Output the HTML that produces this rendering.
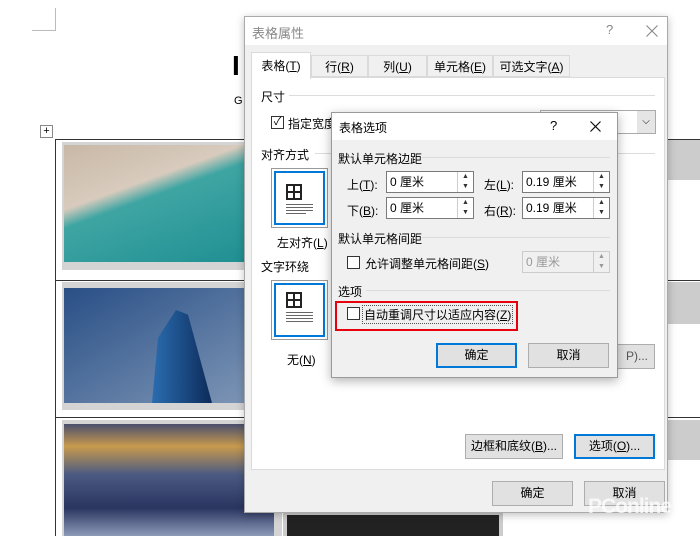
<!DOCTYPE html><html><head><meta charset="utf-8"><style>
*{margin:0;padding:0;box-sizing:border-box}
body{width:700px;height:536px;position:relative;overflow:hidden;background:#fff;font-family:"Liberation Sans","Noto Sans CJK SC",sans-serif;font-size:12px;color:#000}
.a{position:absolute}
.btn{position:absolute;background:#e1e1e1;border:1px solid #adadad;text-align:center;line-height:23px;font-size:12px}
.btn.f{border:2px solid #0078d7;line-height:21px}
.inp{position:absolute;background:#fff;border:1px solid #7a7a7a;height:22px;line-height:20px;padding-left:3px}
.spin{position:absolute;right:0;top:0;width:16px;height:20px;border-left:1px solid #ccc;font-size:7px;line-height:10px;text-align:center;color:#333}
.cb{position:absolute;width:13px;height:13px;border:1px solid #333;background:#fff}
.hl{position:absolute;height:1px;background:#dcdcdc}
.grid{position:absolute;width:16px;height:16px;border:2px solid #222;background:linear-gradient(#222,#222) center/2px 100% no-repeat,linear-gradient(#222,#222) center/100% 2px no-repeat}
u{text-decoration:underline}
</style></head><body>
<div class="a" style="left:32px;top:30px;width:24px;height:1px;background:#bbb"></div>
<div class="a" style="left:55px;top:8px;width:1px;height:23px;background:#bbb"></div>
<div class="a" style="left:232px;top:50px;font-size:28px;font-weight:bold">I</div>
<div class="a" style="left:234px;top:95px;font-size:11px">G</div>
<div class="a" style="left:40px;top:125px;width:13px;height:13px;border:1px solid #888;font-size:11px;line-height:10px;text-align:center">+</div>
<div class="a" style="left:55px;top:139px;width:645px;height:1px;background:#333"></div>
<div class="a" style="left:55px;top:280px;width:645px;height:1px;background:#333"></div>
<div class="a" style="left:55px;top:417px;width:645px;height:1px;background:#333"></div>
<div class="a" style="left:55px;top:139px;width:1px;height:397px;background:#333"></div>
<div class="a" style="left:665px;top:140px;width:35px;height:40px;background:#ccc"></div>
<div class="a" style="left:665px;top:282px;width:35px;height:42px;background:#ccc"></div>
<div class="a" style="left:665px;top:420px;width:35px;height:40px;background:#ccc"></div>
<div class="a" style="left:62px;top:142px;width:190px;height:128px;background:#d4d4d4"></div>
<div class="a" style="left:64px;top:145px;width:188px;height:117px;background:linear-gradient(160deg,#c8b8a6 0%,#d8cbbd 35%,#3fa5a3 45%,#1f8f92 100%)"></div>
<div class="a" style="left:62px;top:282px;width:190px;height:128px;background:#d4d4d4"></div>
<div class="a" style="left:64px;top:288px;width:188px;height:115px;background:linear-gradient(150deg,#294f86,#7e96b6)"></div>
<div class="a" style="left:152px;top:310px;width:60px;height:93px;background:linear-gradient(90deg,#2a6db0,#0d2b5a);clip-path:polygon(40% 0,60% 5%,100% 100%,0 100%,10% 30%)"></div>
<div class="a" style="left:62px;top:420px;width:220px;height:116px;background:#d4d4d4"></div>
<div class="a" style="left:64px;top:424px;width:210px;height:112px;background:linear-gradient(180deg,#4a4f6e 0%,#c89a4d 20%,#4b5a82 45%,#2a3560 75%,#8d9ab8 100%)"></div>
<div class="a" style="left:283px;top:513px;width:220px;height:23px;background:#ccc"></div>
<div class="a" style="left:287px;top:515px;width:212px;height:21px;background:#222"></div>

<div class="a" style="left:244px;top:16px;width:424px;height:497px;background:#f0f0f0;border:1px solid #aaa;box-shadow:0 2px 8px rgba(0,0,0,.25)"></div>
<div class="a" style="left:245px;top:17px;width:422px;height:28px;background:#fff"></div>
<div class="a" style="left:252px;top:23px;color:#888;font-size:13px">表格属性</div>
<div class="a" style="left:606px;top:22px;color:#888;font-size:13px">?</div>
<svg class="a" style="left:646px;top:25px" width="12" height="12"><path d="M0.5 0.5L11.5 11.5M11.5 0.5L0.5 11.5" stroke="#888" stroke-width="1.1"/></svg>
<div class="a" style="left:251px;top:77px;width:414px;height:393px;background:#fff;border:1px solid #dadada"></div>
<div class="a" style="left:251px;top:52px;width:60px;height:27px;background:#fff;border:1px solid #dadada;border-bottom:none;line-height:26px;text-align:center">表格(<u>T</u>)</div>
<div class="a" style="left:311px;top:55px;width:57px;height:22px;background:#f0f0f0;border:1px solid #dadada;line-height:22px;text-align:center">行(<u>R</u>)</div>
<div class="a" style="left:368px;top:55px;width:59px;height:22px;background:#f0f0f0;border:1px solid #dadada;line-height:22px;text-align:center">列(<u>U</u>)</div>
<div class="a" style="left:427px;top:55px;width:66px;height:22px;background:#f0f0f0;border:1px solid #dadada;line-height:22px;text-align:center">单元格(<u>E</u>)</div>
<div class="a" style="left:493px;top:55px;width:77px;height:22px;background:#f0f0f0;border:1px solid #dadada;line-height:22px;text-align:center">可选文字(<u>A</u>)</div>
<div class="a" style="left:261px;top:88px">尺寸</div><div class="hl" style="left:289px;top:95px;width:366px"></div>
<div class="cb" style="left:271px;top:116px;text-align:center;line-height:10px;font-size:11px">✓</div>
<div class="a" style="left:288px;top:115px">指定宽度</div>
<div class="a" style="left:540px;top:110px;width:116px;height:24px;border:1px solid #aaa;background:#fff"></div>
<div class="a" style="left:637px;top:111px;width:18px;height:22px;background:#e5e5e5;font-size:10px;text-align:center;line-height:22px">⌵</div>
<div class="a" style="left:261px;top:146px">对齐方式</div><div class="hl" style="left:315px;top:153px;width:340px"></div>
<div class="a" style="left:271px;top:168px;width:57px;height:60px;border:1px solid #999;background:#fff"><div style="margin:2px;height:54px;border:2px solid #0078d7;position:relative">
<div class="grid" style="left:10px;top:11px"></div>
<div class="a" style="left:10px;top:31px;width:27px;height:1px;background:#666"></div>
<div class="a" style="left:10px;top:34px;width:27px;height:1px;background:#666"></div>
<div class="a" style="left:10px;top:37px;width:27px;height:1px;background:#666"></div>
<div class="a" style="left:10px;top:40px;width:20px;height:1px;background:#666"></div></div></div>
<div class="a" style="left:277px;top:234px">左对齐(<u>L</u>)</div>
<div class="a" style="left:261px;top:258px">文字环绕</div>
<div class="a" style="left:271px;top:280px;width:57px;height:60px;border:1px solid #999;background:#fff"><div style="margin:2px;height:54px;border:2px solid #0078d7;position:relative">
<div class="grid" style="left:10px;top:7px"></div>
<div class="a" style="left:10px;top:27px;width:27px;height:1px;background:#666"></div>
<div class="a" style="left:10px;top:30px;width:27px;height:1px;background:#666"></div>
<div class="a" style="left:10px;top:33px;width:27px;height:1px;background:#666"></div>
<div class="a" style="left:10px;top:36px;width:27px;height:1px;background:#666"></div></div></div>
<div class="a" style="left:287px;top:351px">无(<u>N</u>)</div>
<div class="btn" style="left:600px;top:344px;width:55px;height:25px;text-align:right;padding-right:6px;color:#555">P)...</div>
<div class="btn" style="left:465px;top:434px;width:98px;height:25px">边框和底纹(<u>B</u>)...</div>
<div class="btn f" style="left:574px;top:434px;width:81px;height:25px">选项(<u>O</u>)...</div>
<div class="btn" style="left:492px;top:481px;width:81px;height:25px">确定</div>
<div class="btn" style="left:584px;top:481px;width:81px;height:25px">取消</div>
<div class="a" style="left:588px;top:495px;font-size:21px;font-weight:bold;color:rgba(255,255,255,.75);letter-spacing:-1px">PConline</div>

<div class="a" style="left:331px;top:112px;width:287px;height:266px;background:#f0f0f0;border:1px solid #999;box-shadow:0 3px 10px rgba(0,0,0,.3)"></div>
<div class="a" style="left:332px;top:113px;width:285px;height:27px;background:#fff"></div>
<div class="a" style="left:339px;top:119px;font-size:12px">表格选项</div>
<div class="a" style="left:550px;top:118px;font-size:13px">?</div>
<svg class="a" style="left:590px;top:121px" width="11" height="11"><path d="M0.5 0.5L10.5 10.5M10.5 0.5L0.5 10.5" stroke="#111" stroke-width="1.2"/></svg>
<div class="a" style="left:338px;top:150px">默认单元格边距</div><div class="hl" style="left:422px;top:157px;width:188px"></div>
<div class="a" style="left:347px;top:176px">上(<u>T</u>):</div>
<div class="inp" style="left:386px;top:171px;width:88px">0 厘米<div class="spin">▲<br>▼</div></div>
<div class="a" style="left:484px;top:176px">左(<u>L</u>):</div>
<div class="inp" style="left:522px;top:171px;width:88px">0.19 厘米<div class="spin">▲<br>▼</div></div>
<div class="a" style="left:347px;top:202px">下(<u>B</u>):</div>
<div class="inp" style="left:386px;top:197px;width:88px">0 厘米<div class="spin">▲<br>▼</div></div>
<div class="a" style="left:484px;top:202px">右(<u>R</u>):</div>
<div class="inp" style="left:522px;top:197px;width:88px">0.19 厘米<div class="spin">▲<br>▼</div></div>
<div class="a" style="left:338px;top:230px">默认单元格间距</div><div class="hl" style="left:422px;top:237px;width:188px"></div>
<div class="cb" style="left:347px;top:256px"></div>
<div class="a" style="left:365px;top:255px">允许调整单元格间距(<u>S</u>)</div>
<div class="inp" style="left:522px;top:251px;width:88px;background:#f0f0f0;border-color:#ccc;color:#999">0 厘米<div class="spin" style="color:#999">▲<br>▼</div></div>
<div class="a" style="left:338px;top:283px">选项</div><div class="hl" style="left:366px;top:290px;width:244px"></div>
<div class="a" style="left:335px;top:301px;width:183px;height:30px;border:2px solid #e8000c"></div>
<div class="cb" style="left:347px;top:307px"></div>
<div class="a" style="left:362px;top:305px;border:1px dotted #555;padding:0 1px">自动重调尺寸以适应内容(<u>Z</u>)</div>
<div class="btn f" style="left:436px;top:343px;width:81px;height:25px">确定</div>
<div class="btn" style="left:528px;top:343px;width:81px;height:25px">取消</div>
</body></html>
